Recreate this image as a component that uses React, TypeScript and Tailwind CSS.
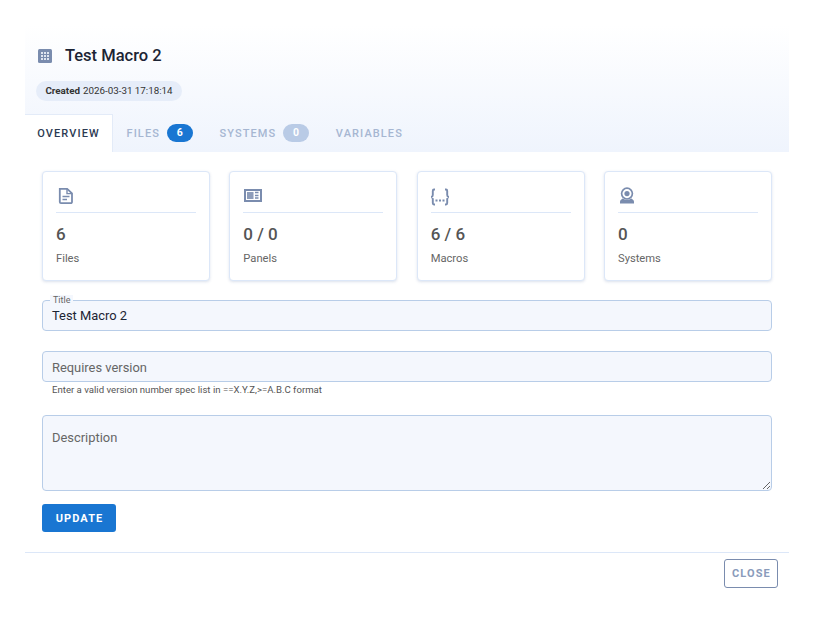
function GridIcon() {
  return (
    <svg className="block size-[14px]" viewBox="0 0 14 14">
      <rect width="14" height="14" rx="1.5" fill="#7a8cae" />
      <g fill="#dfe5f0">
        <rect x="3" y="3" width="2" height="2" />
        <rect x="6" y="3" width="2" height="2" />
        <rect x="9" y="3" width="2" height="2" />
        <rect x="3" y="6" width="2" height="2" />
        <rect x="6" y="6" width="2" height="2" />
        <rect x="9" y="6" width="2" height="2" />
        <rect x="3" y="9" width="2" height="2" />
        <rect x="6" y="9" width="2" height="2" />
        <rect x="9" y="9" width="2" height="2" />
      </g>
    </svg>
  );
}

function FileIcon() {
  return (
    <svg className="block size-[18px]" viewBox="0 0 18 18" fill="none">
      <path d="M2.8 1.9h7.4L15 6.4v8.5a1.2 1.2 0 0 1-1.2 1.2H4a1.2 1.2 0 0 1-1.2-1.2z" stroke="#7a8cae" strokeWidth="1.8" />
      <path d="M10 2v4.6h5" stroke="#7a8cae" strokeWidth="1.4" />
      <path d="M5.5 9.6h7M5.5 12.6h4.5" stroke="#7a8cae" strokeWidth="1.5" />
    </svg>
  );
}

function PanelIcon() {
  return (
    <svg className="block h-[18px] w-[18px]" viewBox="0 0 18 18" fill="none">
      <rect x="0" y="2" width="18" height="13" fill="#7a8cae" />
      <rect x="2" y="4" width="14" height="9" fill="#fff" />
      <rect x="3" y="5" width="6.5" height="7" fill="#7a8cae" opacity="0.85" />
      <path d="M11 5.5h3.5M11 8.5h3.5M11 11h3.5" stroke="#7a8cae" strokeWidth="1.4" />
    </svg>
  );
}

function BracesIcon() {
  return (
    <svg className="-ml-[2px] block size-[20px]" viewBox="0 0 20 20" fill="none">
      <path d="M5 2.5H4Q2.8 2.5 2.8 4v4Q2.8 9.7 1.2 10 2.8 10.3 2.8 12v4Q2.8 17.5 4 17.5h1M15 2.5h1Q17.2 2.5 17.2 4v4q0 1.7 1.6 2-1.6.3-1.6 2v4q0 1.5-1.2 1.5h-1" stroke="#7a8cae" strokeWidth="1.9" />
      <g fill="#7a8cae">
        <rect x="5.5" y="12.5" width="2" height="2" />
        <rect x="9" y="12.5" width="2" height="2" />
        <rect x="12.5" y="12.5" width="2" height="2" />
      </g>
    </svg>
  );
}

function CameraIcon() {
  return (
    <svg className="-ml-px block size-[18px]" viewBox="0 0 18 18" fill="none">
      <circle cx="9" cy="6.6" r="5.4" stroke="#7a8cae" strokeWidth="1.7" />
      <circle cx="9" cy="6.6" r="2.6" fill="#7a8cae" />
      <path d="M4.5 11.5 Q9 14 13.5 11.5 L15.5 13.2 Q16 13.8 16 15 V16.5 H2 V15 Q2 13.8 2.5 13.2 Z" fill="#7a8cae" />
    </svg>
  );
}

const stats = [
  { icon: <FileIcon />, value: "6", label: "Files" },
  { icon: <PanelIcon />, value: "0 / 0", label: "Panels" },
  { icon: <BracesIcon />, value: "6 / 6", label: "Macros" },
  { icon: <CameraIcon />, value: "0", label: "Systems" },
];

function StatCard({ icon, value, label }: { icon: React.ReactNode; value: string; label: string }) {
  return (
    <div className="h-[110px] rounded-[4px] border border-[#dce7f8] bg-white pt-[15px] pr-[13px] pl-[13px] shadow-[0_1px_3px_rgba(90,120,170,0.22)]">
      <div className="flex h-[26px] items-start border-b border-[#dce7f8]">
        <div className="ml-px">{icon}</div>
      </div>
      <div className="mt-[11px] text-[17px] leading-[21px] font-medium text-[#555]">{value}</div>
      <div className="mt-[7px] text-[11.2px] leading-[14px] text-[#666]">{label}</div>
    </div>
  );
}

function Tab({ label, count, dim }: { label: string; count?: string; dim?: boolean }) {
  return (
    <div className="flex items-center gap-[7px] px-[13.5px] text-[11px] font-medium tracking-[1.1px] text-[#a6b6d2]">
      <span className="mt-[3px]">{label}</span>
      {count && (
        <span className={`flex h-[18px] w-[25.5px] items-center justify-center rounded-full text-[10.5px] font-bold tracking-normal text-white ${dim ? "bg-[#b9cbe6]" : "bg-[#1976d2]"}`}>
          {count}
        </span>
      )}
    </div>
  );
}

export default function App() {
  return (
    <div className="h-[617px] w-[814px] bg-white pt-[25px] pl-[25px] font-['Roboto',sans-serif]">
      <div className="w-[764px]">
        <div className="h-[127px] bg-gradient-to-b from-white to-[#eff4fd]">
          <div className="flex items-center pt-[20px] pl-[13px]">
            <GridIcon />
            <h1 className="ml-[13px] text-[16.5px] leading-[22px] font-medium text-[#1c2434]">Test Macro 2</h1>
          </div>
          <div className="mt-[14px] ml-[11px] flex h-[20px] w-[146px] items-center justify-center gap-[3px] rounded-full bg-[#e6edf9] text-[9.8px] text-[#333]">
            <span className="font-bold">Created</span>
            <span>2026-03-31 17:18:14</span>
          </div>
          <div className="mt-[13px] flex h-[38px]">
            <div className="flex w-[88px] items-center justify-center border-t border-r border-[#e3ebf8] bg-white pt-px text-[11px] font-medium tracking-[1.1px] text-[#2c3a52]">
              OVERVIEW
            </div>
            <Tab label="FILES" count="6" />
            <Tab label="SYSTEMS" count="0" dim />
            <Tab label="VARIABLES" />
          </div>
        </div>

        <div className="px-[17px] pt-[19px]">
          <div className="grid grid-cols-4 gap-[19.33px]">
            {stats.map((s) => (
              <StatCard key={s.label} icon={s.icon} value={s.value} label={s.label} />
            ))}
          </div>

          <div className="relative mt-[19px] flex h-[31px] items-center rounded-[4px] border border-[#b8cde8] bg-[#f4f7fd] px-[9px] text-[12.9px] text-[#1c2434]">
            <span className="absolute -top-[6px] left-[7px] bg-[#f4f7fd] px-[3px] text-[9px] leading-[10px] text-[#666]">Title</span>
            <span className="mt-[1px]">Test Macro 2</span>
          </div>

          <div className="mt-[20px] flex h-[31px] items-center rounded-[4px] border border-[#b8cde8] bg-[#f4f7fd] px-[9px] pt-[2px] text-[12.9px] text-[#666]">
            Requires version
          </div>
          <p className="mt-[1px] pl-[10px] text-[9.6px] leading-[14px] text-[#555]">
            Enter a valid version number spec list in ==X.Y.Z,&gt;=A.B.C format
          </p>

          <textarea
            className="mt-[18px] block h-[76px] w-full rounded-[4px] border border-[#b8cde8] bg-[#f4f7fd] px-[9px] py-[13px] text-[12.9px] leading-[18px] text-[#1c2434] outline-none placeholder:text-[#666]"
            placeholder="Description"
          />

          <button className="mt-[13px] block h-[28px] w-[74px] rounded-[3px] bg-[#1976d2] pt-[2px] pl-px text-[11px] font-bold tracking-[1.1px] text-white">
            UPDATE
          </button>
        </div>

        <div className="mt-[20px] flex justify-end border-t border-[#dce7f8] pt-[6px] pr-[11px]">
          <button className="h-[29px] w-[54px] rounded-[3px] border border-[#7a8cae] bg-white pt-[2px] pl-px text-[11px] font-bold tracking-[1.1px] text-[#8a9bbb]">
            CLOSE
          </button>
        </div>
      </div>
    </div>
  );
}
